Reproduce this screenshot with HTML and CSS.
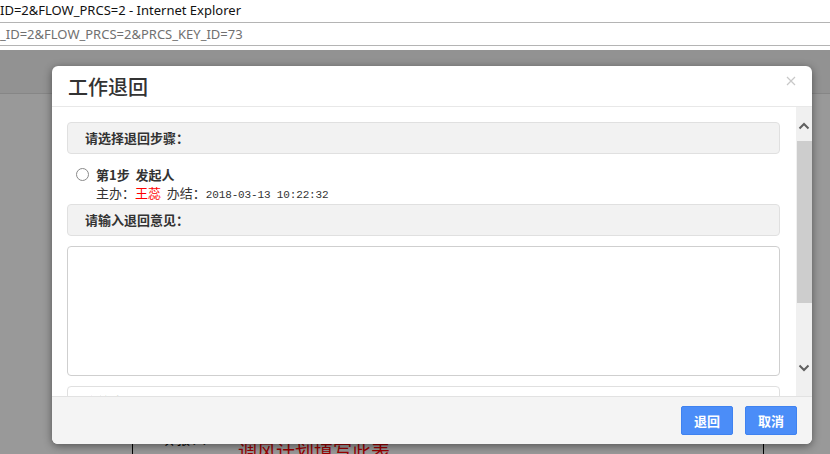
FILE: index.html
```html
<!DOCTYPE html>
<html lang="zh-CN">
<head>
<meta charset="utf-8">
<title>工作退回</title>
<link rel="stylesheet" href="styles.css">
</head>
<body>
<div class="ie-title">ID=2&amp;FLOW_PRCS=2 - Internet Explorer</div>
<div class="ie-address">_ID=2&amp;FLOW_PRCS=2&amp;PRCS_KEY_ID=73</div>
<div class="viewport">
  <div class="page">
    <div class="page-top"></div>
    <div class="page-table">
      <div class="page-row">
        <span class="page-label">填 报 人</span>
        <span class="page-note">调风计划填写此表</span>
      </div>
    </div>
  </div>
  <div class="overlay"></div>
  <div class="modal">
    <div class="modal-header">
      <h4 class="modal-title">工作退回</h4>
      <svg class="close" width="10" height="10" viewBox="0 0 10 10"><path d="M1 1L9 9M9 1L1 9" stroke="#c8c8c8" stroke-width="1.2"/></svg>
    </div>
    <div class="modal-body">
      <div class="body-content">
        <div class="panel-head">请选择退回步骤：</div>
        <div class="step">
          <div class="step-line1"><span class="radio"></span><b>第1步&nbsp;&nbsp;发起人</b></div>
          <div class="step-line2">主办：<span class="red">王蕊</span>&nbsp;&nbsp;办结：<span class="mono">2018-03-13 10:22:32</span></div>
        </div>
        <div class="panel-head">请输入退回意见：</div>
        <textarea class="opinion"></textarea>
        <div class="panel-head panel-white">会签意见：</div>
      </div>
      <div class="scrollbar">
        <svg class="arrow" width="12" height="8" viewBox="0 0 12 8"><path d="M1.5 6.5L6 2L10.5 6.5" fill="none" stroke="#5f5f5f" stroke-width="2"/></svg>
        <div class="track"><div class="thumb"></div></div>
        <svg class="arrow" width="12" height="8" viewBox="0 0 12 8"><path d="M1.5 1.5L6 6L10.5 1.5" fill="none" stroke="#5f5f5f" stroke-width="2"/></svg>
      </div>
    </div>
    <div class="modal-footer">
      <button class="btn">退回</button>
      <button class="btn">取消</button>
    </div>
  </div>
</div>
</body>
</html>
```

FILE: styles.css
```css
* { box-sizing: border-box; }
html, body { margin: 0; padding: 0; }
body {
  width: 830px;
  height: 454px;
  overflow: hidden;
  background: #fff;
  font-family: "Noto Sans", "Noto Sans CJK SC", sans-serif;
}
.ie-title {
  height: 23px;
  line-height: 21px;
  font-size: 13px;
  color: #111;
  border-bottom: 1px solid #b4b4b4;
  white-space: nowrap;
}
.ie-address {
  height: 23px;
  line-height: 22px;
  font-size: 13px;
  color: #707070;
  border-bottom: 1px solid #b4b4b4;
  white-space: nowrap;
  margin-bottom: 4px;
}
.viewport {
  position: relative;
  height: 404px;
  overflow: hidden;
}
.page { height: 100%; background: #fff; }
.page-top {
  height: 44px;
  background: #f3f3f3;
  border-bottom: 1px solid #e0e0e0;
}
.page-table {
  margin: 338px 0 0 132px;
  width: 632px;
  height: 40px;
  border-left: 1px solid #000;
  border-right: 1px solid #000;
}
.page-row {
  display: flex;
  align-items: flex-start;
  padding-top: 4px;
}
.page-label {
  width: 108px;
  padding-left: 28px;
  margin-top: -6px;
  font-size: 13px;
  line-height: 18px;
  color: #000;
  font-family: "Noto Sans CJK SC", sans-serif;
}
.page-note {
  font-size: 19px;
  color: #ff0000;
  font-family: "Noto Sans CJK SC", sans-serif;
  line-height: 22px;
  margin-top: 4px;
  margin-left: -3px;
}
.overlay {
  position: absolute;
  inset: 0;
  background: rgba(0, 0, 0, 0.4);
}
.modal {
  position: absolute;
  left: 52px;
  top: 16px;
  width: 760px;
  height: 378px;
  background: #fff;
  border-radius: 6px;
  box-shadow: 0 2px 8px rgba(0, 0, 0, 0.45);
  display: flex;
  flex-direction: column;
  overflow: hidden;
}
.modal-header {
  height: 41px;
  border-bottom: 1px solid #e8e8e8;
  display: flex;
  align-items: center;
  justify-content: space-between;
  padding: 0 16px 0 16px;
}
.modal-title {
  margin: 0;
  font-size: 20px;
  font-weight: 500;
  color: #333;
  font-family: "Noto Sans CJK SC", sans-serif;
  line-height: 24px;
  padding-top: 1px;
}
.close { margin-top: -10px; margin-right: 0; }
.modal-body {
  height: 289px;
  display: flex;
}
.body-content {
  flex: 1;
  padding: 15px 16px 0 15px;
  overflow: hidden;
  font-family: "Noto Sans CJK SC", sans-serif;
}
.panel-head {
  height: 32px;
  line-height: 30px;
  background: #f2f2f2;
  border: 1px solid #e0e0e0;
  border-radius: 4px;
  padding-left: 17px;
  font-size: 13px;
  font-weight: 700;
  color: #333;
}
.panel-white { background: #fff; margin-top: 10px; }
.step {
  padding: 10px 0 2px 9px;
  font-size: 13px;
  color: #333;
}
.step-line1 {
  height: 20px;
  display: flex;
  align-items: center;
}
.step-line1 b { white-space: pre; }
.radio {
  width: 13px;
  height: 13px;
  border: 1px solid #8a8a8a;
  border-radius: 50%;
  margin-right: 7px;
  background: #fff;
}
.step-line2 {
  height: 18px;
  line-height: 18px;
  padding-left: 20px;
  font-size: 13px;
  white-space: nowrap;
}
.red { color: #f00; }
.mono {
  font-family: "Liberation Mono", monospace;
  font-size: 11px;
  letter-spacing: -0.15px;
}
.opinion {
  display: block;
  width: 100%;
  height: 130px;
  margin-top: 10px;
  border: 1px solid #cfcfcf;
  border-radius: 4px;
  resize: none;
  background: #fff;
}
.scrollbar {
  width: 16px;
  background: #f0f0f0;
  display: flex;
  flex-direction: column;
  align-items: center;
  padding-top: 15px;
}
.scrollbar .arrow { flex: none; }
.track {
  width: 16px;
  height: 234px;
  padding-top: 11px;
}
.thumb {
  width: 15px;
  margin-left: 1px;
  height: 162px;
  background: #cdcdcd;
}
.modal-footer {
  flex: 1;
  border-top: 1px solid #e2e2e2;
  background: #f4f4f4;
  display: flex;
  justify-content: flex-end;
  gap: 12px;
  padding: 9px 15px 0 0;
}
.btn {
  width: 52px;
  height: 29px;
  border: 1px solid #3f82f0;
  border-radius: 2px;
  background: #4b8df8;
  color: #fff;
  font-size: 13px;
  font-weight: 700;
  font-family: "Noto Sans CJK SC", sans-serif;
  padding: 0;
}
```
